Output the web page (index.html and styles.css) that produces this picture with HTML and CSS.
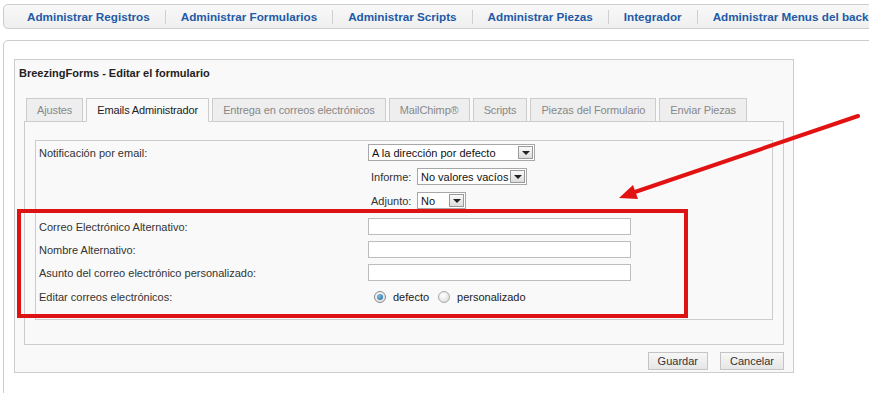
FILE: index.html
```html
<!doctype html>
<html>
	<head>
		<meta charset="utf-8">
		<title>BreezingForms - Editar el formulario</title>
		<link rel="stylesheet" href="styles.css">
	</head>
	<body>

		<!--	Admin menu.	-->
		<nav class="topMenu">
			<a href="#">Administrar Registros</a>
			<a href="#">Administrar Formularios</a>
			<a href="#">Administrar Scripts</a>
			<a href="#">Administrar Piezas</a>
			<a href="#">Integrador</a>
			<a href="#">Administrar Menus del backend</a>
		</nav>

		<div class="page">

			<div class="formBox">

				<h2 class="formTitle">BreezingForms - Editar el formulario</h2>

				<ul class="tabs">
					<li class="tab">Ajustes</li>
					<li class="tab active">Emails Administrador</li>
					<li class="tab">Entrega en correos electrónicos</li>
					<li class="tab">MailChimp®</li>
					<li class="tab">Scripts</li>
					<li class="tab">Piezas del Formulario</li>
					<li class="tab">Enviar Piezas</li>
				</ul>

				<div class="tabPanel">
					<div class="settings">

						<div class="row">
							<span class="lbl">Notificación por email:</span>
							<span class="sel selWide"><span class="selText">A la dirección por defecto</span><span class="selBtn"></span></span>
						</div>

						<div class="row rowSub">
							<span class="lbl"></span>
							<span class="subLbl">Informe:</span>
							<span class="sel selMid"><span class="selText">No valores vacíos</span><span class="selBtn"></span></span>
						</div>

						<div class="row rowSub">
							<span class="lbl"></span>
							<span class="subLbl">Adjunto:</span>
							<span class="sel selSmall"><span class="selText">No</span><span class="selBtn"></span></span>
						</div>

						<div class="row rowGap">
							<span class="lbl">Correo Electrónico Alternativo:</span>
							<input class="txt" type="text">
						</div>

						<div class="row">
							<span class="lbl">Nombre Alternativo:</span>
							<input class="txt" type="text">
						</div>

						<div class="row">
							<span class="lbl">Asunto del correo electrónico personalizado:</span>
							<input class="txt" type="text">
						</div>

						<div class="row rowRadio">
							<span class="lbl">Editar correos electrónicos:</span>
							<span class="radio checked"></span><span class="radioText">defecto</span>
							<span class="radio"></span><span class="radioText">personalizado</span>
						</div>

					</div>
				</div>

				<div class="actions">
					<button class="btn">Guardar</button>
					<button class="btn">Cancelar</button>
				</div>

			</div>

		</div>

		<!--	Annotation drawn over the screenshot.	-->
		<div class="highlight"></div>
		<svg class="arrow" width="869" height="393" viewBox="0 0 869 393">
			<line x1="858" y1="116" x2="632" y2="193" stroke="#e31212" stroke-width="4" stroke-linecap="round"/>
			<polygon points="619,198 638,199 633,185" fill="#e31212"/>
		</svg>

	</body>
</html>
```

FILE: styles.css
```css
html, body {
	margin: 0;
	padding: 0;
	background-color: #ffffff;
	font-family: "Liberation Sans", Arial, sans-serif;
	font-size: 11px;
	color: #333333;
	overflow: hidden;
}

body {
	position: relative;
	width: 869px;
	height: 393px;
}

/* top admin menu */
.topMenu {
	box-sizing: border-box;
	margin: 4px 0 0 3px;
	width: 1000px;
	height: 25px;
	border: 1px solid #cccccc;
	border-radius: 5px;
	background: linear-gradient(#f8f8f8, #efefef);
	display: flex;
	align-items: center;
	padding-left: 8px;
	white-space: nowrap;
}

.topMenu a {
	color: #1f5aa6;
	font-weight: bold;
	font-size: 11.7px;
	line-height: 14px;
	text-decoration: none;
	padding: 0 15px;
	border-left: 1px solid #d0d0d0;
}

.topMenu a:first-child {
	border-left: none;
}

/* main page frame */
.page {
	box-sizing: border-box;
	margin: 11px 0 0 3px;
	width: 1000px;
	height: 400px;
	border: 1px solid #cccccc;
	border-radius: 5px;
	padding: 18px 0 0 10px;
}

.formBox {
	box-sizing: border-box;
	width: 780px;
	height: 314px;
	border: 1px solid #cccccc;
	background-color: #f9f9f9;
	padding: 6px 9px 0 4px;
}

.formTitle {
	margin: 0;
	font-size: 11px;
	line-height: 14px;
	font-weight: bold;
	color: #222222;
}

/* tabs */
.tabs {
	list-style: none;
	margin: 18px 0 -1px 5px;
	padding: 0 0 0 2px;
	display: flex;
	gap: 3px;
	position: relative;
	z-index: 1;
}

.tab {
	box-sizing: border-box;
	height: 24px;
	line-height: 22px;
	padding: 0 10px;
	border: 1px solid #cccccc;
	background-color: #eeeeee;
	color: #888888;
	letter-spacing: -0.12px;
}

.tab.active {
	background-color: #f9f9f9;
	border-bottom-color: #f9f9f9;
	color: #222222;
}

.tabPanel {
	box-sizing: border-box;
	width: 760px;
	margin-left: 5px;
	border: 1px solid #cccccc;
	background-color: #f9f9f9;
	padding: 18px 10px 24px 10px;
}

.settings {
	border: 1px solid #cccccc;
	background-color: #f9f9f9;
	padding: 0 0 11px 3px;
}

.row {
	display: flex;
	align-items: center;
	height: 23px;
}

.rowSub {
	margin-top: 1px;
}

.rowGap {
	margin-top: 3px;
}

.rowRadio {
	margin-top: 1px;
}

.lbl {
	width: 329px;
	flex-shrink: 0;
}

.subLbl {
	margin-left: 3px;
	width: 46px;
}

/* select boxes */
.sel {
	box-sizing: border-box;
	display: inline-flex;
	align-items: center;
	justify-content: space-between;
	height: 17px;
	border: 1px solid #a7a7a7;
	background-color: #ffffff;
	padding: 0 1px 0 3px;
	color: #111111;
}

.selWide {
	width: 167px;
}

.selMid {
	width: 110px;
}

.selSmall {
	width: 49px;
}

.selBtn {
	box-sizing: border-box;
	position: relative;
	width: 15px;
	height: 13px;
	border: 1px solid #9a9a9a;
	background: linear-gradient(#fafafa, #dcdcdc);
}

.selBtn::after {
	content: "";
	position: absolute;
	left: 3px;
	top: 4px;
	border-left: 4px solid transparent;
	border-right: 4px solid transparent;
	border-top: 4px solid #222222;
}

/* text inputs */
.txt {
	box-sizing: border-box;
	width: 263px;
	height: 17px;
	margin: 0;
	border: 1px solid #bdbdbd;
	background-color: #ffffff;
	padding: 0 2px;
}

/* radios */
.radio {
	box-sizing: border-box;
	width: 12px;
	height: 12px;
	border-radius: 50%;
	border: 1px solid #a9a9a9;
	background: radial-gradient(circle at 40% 35%, #ffffff, #d8d8d8);
	margin-left: 6px;
	position: relative;
}

.radio.checked {
	border-color: #8b8b8b;
}

.radio.checked::after {
	content: "";
	position: absolute;
	left: 2px;
	top: 2px;
	width: 6px;
	height: 6px;
	border-radius: 50%;
	background: radial-gradient(circle at 35% 35%, #7fc0e8, #1c5f95);
}

.radioText {
	margin-left: 7px;
	color: #222222;
}

.radioText + .radio {
	margin-left: 9px;
}

/* buttons */
.actions {
	display: flex;
	justify-content: flex-end;
	gap: 12px;
	margin-top: 7px;
}

.btn {
	box-sizing: border-box;
	height: 18px;
	padding: 0 9px;
	border: 1px solid #c4c4c4;
	background: linear-gradient(#f7f7f7, #e6e6e6);
	font-family: "Liberation Sans", Arial, sans-serif;
	font-size: 11px;
	color: #333333;
}

/* annotation overlay */
.highlight {
	position: absolute;
	left: 17px;
	top: 209px;
	width: 671px;
	height: 109px;
	box-sizing: border-box;
	border: 4px solid #dd1212;
}

.arrow {
	position: absolute;
	left: 0;
	top: 0;
	pointer-events: none;
}
```
